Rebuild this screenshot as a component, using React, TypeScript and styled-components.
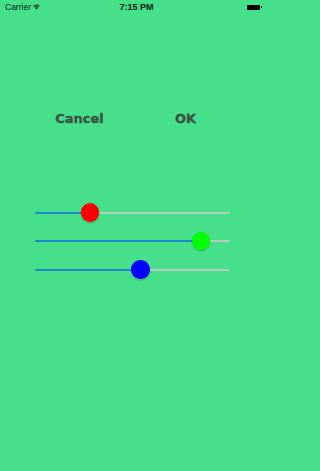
import React from "react";
import styled, { createGlobalStyle } from "styled-components";

const Global = createGlobalStyle`
  html, body { margin: 0; padding: 0; background: #46e08b; }
  body { font-family: "Liberation Sans", Arial, sans-serif; }
  #root { width: 265px; height: 471px; }
`;

const Screen = styled.div`
  width: 265px;
  height: 471px;
  background: #46e08b;
  display: flex;
  flex-direction: column;
  overflow: hidden;
`;

const StatusBar = styled.div`
  height: 14px;
  display: grid;
  grid-template-columns: 1fr auto 1fr;
  align-items: center;
  padding: 0 4px 0 5px;
  color: #0b1a10;
  font-size: 8.5px;
`;

const Left = styled.div`
  display: flex;
  align-items: center;
  gap: 2px;
`;

const Time = styled.div`
  font-weight: bold;
  font-size: 9px;
  margin-left: 7px;
`;

const Right = styled.div`
  display: flex;
  justify-content: flex-end;
  align-items: center;
`;

const Battery = styled.div`
  width: 13px;
  height: 5px;
  background: #000;
  border-radius: 1px;
  position: relative;
  margin-right: 1px;
  &::after {
    content: "";
    position: absolute;
    right: -1.5px;
    top: 1.5px;
    width: 1px;
    height: 2px;
    background: #000;
  }
`;

const ButtonRow = styled.div`
  margin-top: 89px;
  height: 30px;
  padding: 0 26.5px;
  display: grid;
  grid-template-columns: 1fr 1fr;
  align-items: center;
`;

const Button = styled.button`
  background: none;
  border: none;
  padding: 0;
  font-family: "DejaVu Sans", "Liberation Sans", sans-serif;
  font-weight: bold;
  font-size: 13px;
  color: #3d5146;
  -webkit-text-stroke: 0.35px #3d5146;
  text-align: center;
`;

const Sliders = styled.div`
  margin-top: 65px;
  padding-left: 35px;
  display: flex;
  flex-direction: column;
`;

const SliderRow = styled.div<{ $h: number }>`
  height: ${(p) => p.$h}px;
  width: 195px;
  position: relative;
  display: flex;
  align-items: center;
`;

const Track = styled.div`
  width: 100%;
  height: 2px;
  background: #b3cbbc;
  border-radius: 1px;
  position: relative;
`;

const Fill = styled.div`
  height: 100%;
  background: #1e88cf;
  border-radius: 1px;
`;

const Thumb = styled.div<{ $color: string }>`
  position: absolute;
  top: 50%;
  width: 18.5px;
  height: 18.5px;
  margin: -9.25px 0 0 -9.25px;
  border-radius: 50%;
  background: ${(p) => p.$color};
  box-shadow: 0 1.5px 2px rgba(0, 0, 0, 0.18);
`;

const Slider = ({ value, color, h }: { value: number; color: string; h: number }) => {
  const pos = 9.25 + value * (195 - 18.5);
  return (
    <SliderRow $h={h}>
      <Track>
        <Fill style={{ width: `${pos}px` }} />
      </Track>
      <Thumb $color={color} style={{ left: `${pos}px` }} />
    </SliderRow>
  );
};

const Wifi = () => (
  <svg width="7" height="6" viewBox="0 0 14 11">
    <path d="M7 10.5 L4.6 7.8 A3.4 3.4 0 0 1 9.4 7.8 Z" fill="#0b1a10" />
    <path d="M2.6 5.6 A6.4 6.4 0 0 1 11.4 5.6 L10.1 7 A4.5 4.5 0 0 0 3.9 7 Z" fill="#0b1a10" />
    <path d="M0.5 3.3 A9.4 9.4 0 0 1 13.5 3.3 L12.2 4.7 A7.5 7.5 0 0 0 1.8 4.7 Z" fill="#0b1a10" />
  </svg>
);

export default function App() {
  return (
    <>
      <Global />
      <Screen>
        <StatusBar>
          <Left>
            <span>Carrier</span>
            <Wifi />
          </Left>
          <Time>7:15 PM</Time>
          <Right>
            <Battery />
          </Right>
        </StatusBar>
        <ButtonRow>
          <Button>Cancel</Button>
          <Button>OK</Button>
        </ButtonRow>
        <Sliders>
          <Slider h={29} value={0.26} color="#ff0000" />
          <Slider h={28} value={0.887} color="#00ff00" />
          <Slider h={29} value={0.546} color="#0000ff" />
        </Sliders>
      </Screen>
    </>
  );
}
